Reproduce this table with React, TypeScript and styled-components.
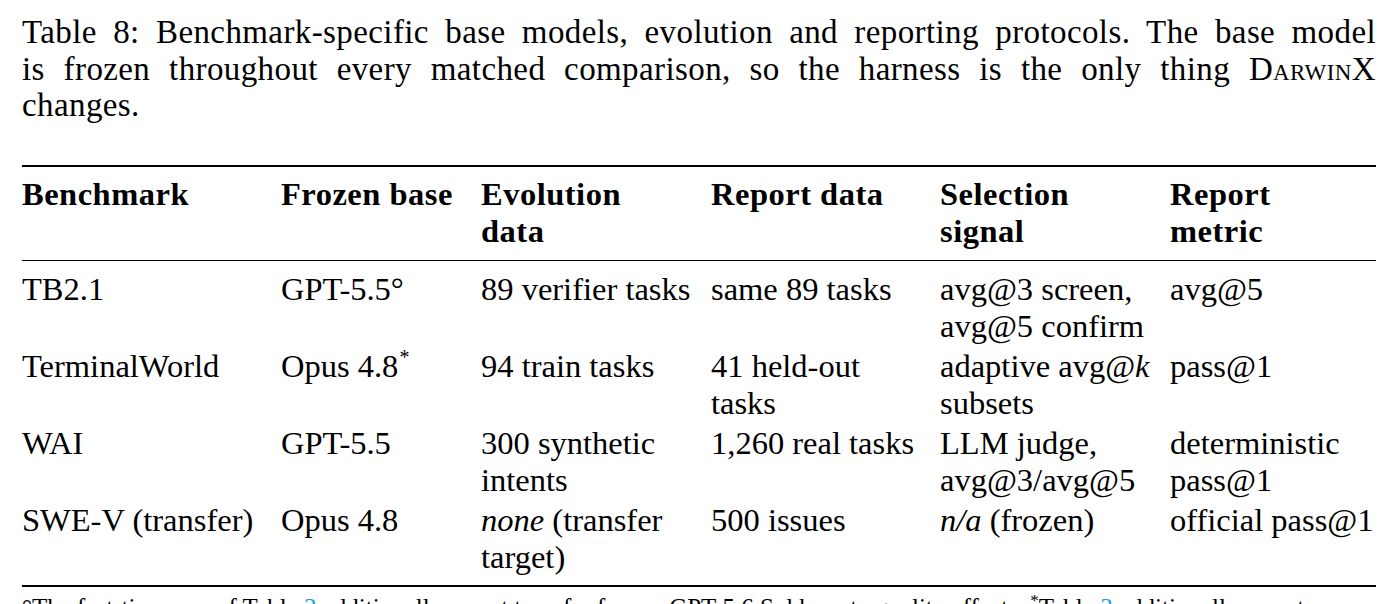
import React from "react";
import styled, { createGlobalStyle } from "styled-components";

const GlobalStyle = createGlobalStyle`
  body {
    margin: 0;
    padding: 0;
    background: #ffffff;
    color: #000000;
    font-family: "Liberation Serif", serif;
  }
`;

const Page = styled.div`
  width: 1354px;
  padding: 14px 20px 0 22px;
  overflow: hidden;
  height: 590px;
`;

const Caption = styled.div`
  font-family: "Liberation Serif", serif;
  font-size: 33px;
  line-height: 36.7px;
  letter-spacing: 0.4px;
`;

const CaptionLine = styled.div<{ $justify?: boolean }>`
  white-space: nowrap;
  text-align: ${(p) => (p.$justify ? "justify" : "left")};
  text-align-last: ${(p) => (p.$justify ? "justify" : "left")};
`;

const SmallCaps = styled.span`
  font-variant: small-caps;
`;

const Rule = styled.div<{ $heavy?: boolean; $gap?: number }>`
  height: ${(p) => (p.$heavy ? "2px" : "1px")};
  background: #000;
  margin-top: ${(p) => p.$gap ?? 0}px;
`;

const Grid = styled.div`
  display: grid;
  grid-template-columns: 259px 200px 230px 229px 230px 206px;
`;

const HeadRow = styled(Grid)`
  padding: 9px 0 10.6px;
`;

const Body = styled.div`
  padding: 10px 0 6px;
`;

const Row = styled(Grid)`
  padding-bottom: 3.6px;
`;

const Cell = styled.div<{ $head?: boolean }>`
  font-family: "Liberation Serif", serif;
  font-size: 32.5px;
  line-height: 36.7px;
  white-space: nowrap;
  font-weight: ${(p) => (p.$head ? 700 : 400)};
  letter-spacing: ${(p) => (p.$head ? "0.5px" : "0")};
`;

const Em = styled.span`
  font-style: italic;
`;

const Mark = styled.sup`
  font-size: 20px;
  line-height: 0;
  vertical-align: 13px;
  margin-left: 1px;
`;

const Footnote = styled.div`
  font-family: "Liberation Serif", serif;
  margin-top: 6px;
  font-size: 25px;
  line-height: 30px;
  white-space: nowrap;
`;

const Ref = styled.span`
  color: #19a4de;
`;

const FootMark = styled.sup`
  font-size: 17px;
  line-height: 0;
  vertical-align: 10px;
`;

const headers: React.ReactNode[] = [
  "Benchmark",
  "Frozen base",
  <>Evolution<br />data</>,
  "Report data",
  <>Selection<br />signal</>,
  <>Report<br />metric</>,
];

const rows: React.ReactNode[][] = [
  [
    "TB2.1",
    <>GPT-5.5°</>,
    "89 verifier tasks",
    "same 89 tasks",
    <>avg@3 screen,<br />avg@5 confirm</>,
    "avg@5",
  ],
  [
    "TerminalWorld",
    <>Opus 4.8<Mark>*</Mark></>,
    "94 train tasks",
    <>41 held-out<br />tasks</>,
    <>adaptive avg@<Em>k</Em><br />subsets</>,
    "pass@1",
  ],
  [
    "WAI",
    "GPT-5.5",
    <>300 synthetic<br />intents</>,
    "1,260 real tasks",
    <>LLM judge,<br />avg@3/avg@5</>,
    <>deterministic<br />pass@1</>,
  ],
  [
    "SWE-V (transfer)",
    "Opus 4.8",
    <><Em>none</Em> (transfer<br />target)</>,
    "500 issues",
    <><Em>n/a</Em> (frozen)</>,
    "official pass@1",
  ],
];

export default function App() {
  return (
    <>
      <GlobalStyle />
      <Page>
        <Caption>
          <CaptionLine $justify>
            Table 8: Benchmark-specific base models, evolution and reporting protocols. The base model
          </CaptionLine>
          <CaptionLine $justify>
            is frozen throughout every matched comparison, so the harness is the only thing <SmallCaps>DarwinX</SmallCaps>
          </CaptionLine>
          <CaptionLine>changes.</CaptionLine>
        </Caption>

        <Rule $heavy $gap={41} />
        <HeadRow>
          {headers.map((h, i) => (
            <Cell key={i} $head>
              {h}
            </Cell>
          ))}
        </HeadRow>
        <Rule />
        <Body>
          {rows.map((r, i) => (
            <Row key={i}>
              {r.map((c, j) => (
                <Cell key={j}>{c}</Cell>
              ))}
            </Row>
          ))}
        </Body>
        <Rule $heavy />
        <Footnote>
          °The fast-tier rows of Table <Ref>3</Ref> additionally report transfer from a GPT-5.6 Sol base to quality effects.{" "}
          <FootMark>*</FootMark>Table <Ref>3</Ref> additionally reports
        </Footnote>
      </Page>
    </>
  );
}
